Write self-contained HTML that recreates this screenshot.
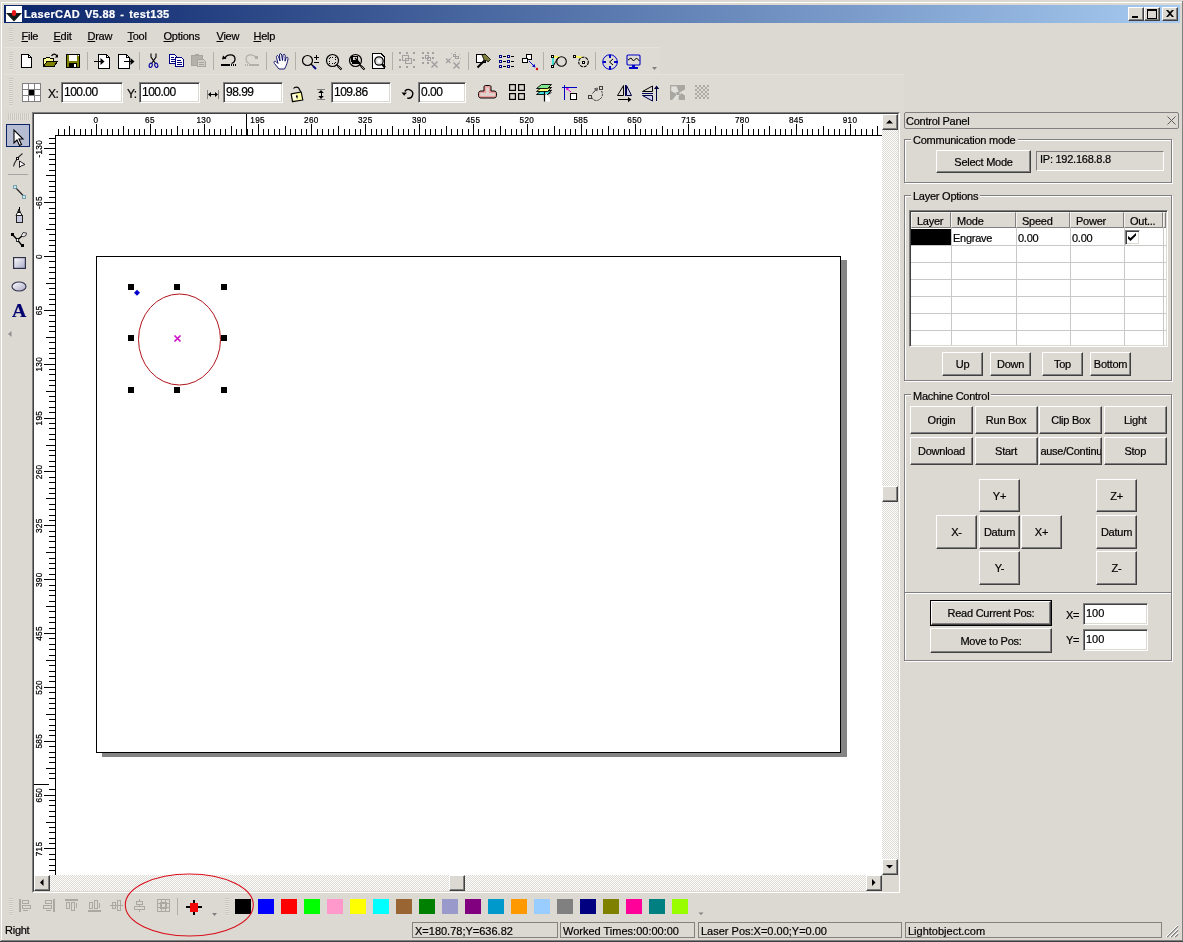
<!DOCTYPE html><html><head><meta charset="utf-8"><title>LaserCAD V5.88 - test135</title><style>
html,body{margin:0;padding:0}
body{width:1183px;height:942px;background:#dcd9d2;position:relative;overflow:hidden;font-family:"Liberation Sans",sans-serif;font-size:11px;color:#000;line-height:13px;letter-spacing:-0.25px;-webkit-text-stroke:0.2px currentColor}
.a{position:absolute}
.t{position:absolute;white-space:nowrap}
.btn{position:absolute;box-sizing:border-box;background:#dcd9d2;border:1px solid;border-color:#fff #404040 #404040 #fff;box-shadow:inset -1px -1px 0 #808080, inset 1px 1px 0 #dcd9d2;text-align:center;white-space:nowrap;overflow:hidden}
.sunk{position:absolute;box-sizing:border-box;background:#fff;border:1px solid;border-color:#808080 #fff #fff #808080;box-shadow:inset 1px 1px 0 #404040, inset -1px -1px 0 #dcd9d2}
.grp{position:absolute;box-sizing:border-box;border:1px solid #808080;box-shadow:1px 1px 0 #fff, inset 1px 1px 0 #fff}
.grp>span{position:absolute;top:-6px;left:6px;background:#dcd9d2;padding:0 2px;white-space:nowrap}
.sep{position:absolute;width:1px;background:#b2afa7}
.grip{position:absolute;width:4px;background:repeating-linear-gradient(to bottom,#cbc8c0 0,#cbc8c0 1px,#e4e1db 1px,#e4e1db 2px)}
.sb{position:absolute;background-image:conic-gradient(#fff 25%,#dcd9d2 0 50%,#fff 0 75%,#dcd9d2 0);background-size:2px 2px}
.st{position:absolute;box-sizing:border-box;border:1px solid #85827c;height:16px;top:922px;padding:2px 0 0 2px;white-space:nowrap;overflow:hidden;letter-spacing:0}
u{text-decoration:underline}
svg{position:absolute;overflow:visible}
</style></head><body><div id="w" style="position:absolute;left:0;top:0;width:1183px;height:942px;will-change:transform;background:#dcd9d2">
<div class="a" style="left:1px;top:2px;width:1181px;height:1px;background:#fff"></div>
<div class="a" style="left:1px;top:2px;width:1px;height:938px;background:#fff"></div>
<div class="a" style="left:1182px;top:1px;width:1px;height:941px;background:#808080"></div>
<div class="a" style="left:1px;top:940px;width:1182px;height:1px;background:#808080"></div>
<div class="a" style="left:0;top:941px;width:1183px;height:1px;background:#404040"></div>
<div class="a" style="left:4px;top:5px;width:1176px;height:18px;background:linear-gradient(to right,#0a246a,#a6caf0)"></div>
<svg style="left:6px;top:6px" width="16" height="16" viewBox="0 0 16 16"><rect width="16" height="16" fill="#fff"/><polygon points="0,7 16,7 8,15.500" fill="#101818"/><ellipse cx="8" cy="7" rx="2.200" ry="3" fill="#e81818"/></svg>
<div class="t" id="title" style="left:24px;top:8px;color:#fff;font-weight:bold;font-size:11px;letter-spacing:0.35px;word-spacing:1.500px">LaserCAD V5.88 - test135</div>
<div class="btn" style="left:1128px;top:7px;width:16px;height:14px"></div>
<svg style="left:1128px;top:7px" width="16" height="14" viewBox="0 0 16 14" shape-rendering="crispEdges"><rect x="4" y="9" width="6" height="2" fill="#000"/></svg>
<div class="btn" style="left:1144px;top:7px;width:16px;height:14px"></div>
<svg style="left:1144px;top:7px" width="16" height="14" viewBox="0 0 16 14" shape-rendering="crispEdges"><rect x="3" y="2" width="9" height="9" fill="none" stroke="#000" stroke-width="1" transform="translate(.5,.5)"/><rect x="3" y="2" width="10" height="2" fill="#000"/></svg>
<div class="btn" style="left:1162px;top:7px;width:16px;height:14px"></div>
<svg style="left:1162px;top:7px" width="16" height="14" viewBox="0 0 16 14" shape-rendering="crispEdges"><path d="M4 3h2l2 2 2-2h2l-3 3.5 3 3.5h-2l-2-2-2 2h-2l3-3.5z" fill="#000" shape-rendering="auto"/></svg>
<div class="grip" style="left:9px;top:28px;height:14px"></div>
<div class="t" style="left:21.5px;top:30px"><u>F</u>ile</div>
<div class="t" style="left:53.5px;top:30px"><u>E</u>dit</div>
<div class="t" style="left:87.5px;top:30px"><u>D</u>raw</div>
<div class="t" style="left:127.5px;top:30px"><u>T</u>ool</div>
<div class="t" style="left:163.5px;top:30px"><u>O</u>ptions</div>
<div class="t" style="left:216.5px;top:30px"><u>V</u>iew</div>
<div class="t" style="left:253.5px;top:30px"><u>H</u>elp</div>
<div class="a" style="left:4px;top:47px;width:656px;height:1px;background:#e4e2dc"></div>
<div class="a" style="left:4px;top:74px;width:900px;height:1px;background:#e4e2dc"></div>
<div class="a" style="left:4px;top:48px;width:656px;height:26px;background:#dedbd4"></div>
<div class="a" style="left:4px;top:75px;width:900px;height:35px;background:#dedbd4"></div>
<div class="grip" style="left:9px;top:52px;height:18px"></div>
<div class="grip" style="left:9px;top:78px;height:28px"></div>
<div class="sep" style="left:87px;top:52px;height:18px"></div>
<div class="sep" style="left:139px;top:52px;height:18px"></div>
<div class="sep" style="left:213px;top:52px;height:18px"></div>
<div class="sep" style="left:266px;top:52px;height:18px"></div>
<div class="sep" style="left:295px;top:52px;height:18px"></div>
<div class="sep" style="left:392px;top:52px;height:18px"></div>
<div class="sep" style="left:468px;top:52px;height:18px"></div>
<div class="sep" style="left:543px;top:52px;height:18px"></div>
<div class="sep" style="left:595px;top:52px;height:18px"></div>
<svg style="left:20px;top:53px" width="16" height="16" viewBox="0 0 16 16" shape-rendering="crispEdges"><path d="M1.5 1.500h7l3 3v9.500h-10z" fill="#fff" stroke="#000"/><path d="M8.500 1.500v3h3" fill="none" stroke="#000"/></svg>
<svg style="left:43px;top:53px" width="16" height="16" viewBox="0 0 16 16" shape-rendering="crispEdges"><path d="M0.500 13.500v-8h2l1-1h3l1 1h3v3" fill="#ffff99" stroke="#000"/><path d="M0.500 13.500l3.500-5h10.500l-3.500 5z" fill="#808000" stroke="#000"/><path d="M8.500 3c1.500-2.500 4.500-2.500 5.500 0.500" fill="none" stroke="#000" stroke-width="1.200" shape-rendering="auto"/><path d="M11.800 4.500h3.200v-3.200z" fill="#000" shape-rendering="auto"/></svg>
<svg style="left:66px;top:54px" width="14" height="14" viewBox="0 0 14 14" shape-rendering="crispEdges"><rect x="0.500" y="0.500" width="13" height="13" fill="#808000" stroke="#000"/><rect x="3" y="1" width="8" height="6" fill="#fff"/><rect x="3" y="9" width="8" height="4" fill="#000"/><rect x="8" y="10" width="2" height="3" fill="#fff"/><rect x="12" y="1" width="1" height="1" fill="#fff"/></svg>
<svg style="left:94px;top:53px" width="18" height="17" viewBox="0 0 18 17" shape-rendering="crispEdges"><path d="M4.500 1.500h8l3 3v11h-11z" fill="#fff" stroke="#000"/><path d="M12.500 1.500v3h3" fill="none" stroke="#000"/><rect x="0" y="8" width="7" height="1" fill="#000"/><path d="M6.500 5l4 3.500-4 3.500z" fill="#000" shape-rendering="auto"/></svg>
<svg style="left:118px;top:53px" width="18" height="17" viewBox="0 0 18 17" shape-rendering="crispEdges"><path d="M0.500 1.500h8l3 3v11h-11z" fill="#fff" stroke="#000"/><path d="M8.500 1.500v3h3" fill="none" stroke="#000"/><rect x="6" y="8" width="7" height="1" fill="#000"/><path d="M12.500 5l4 3.500-4 3.500z" fill="#000" shape-rendering="auto"/></svg>
<svg style="left:148px;top:53px" width="12" height="16" viewBox="0 0 12 16" shape-rendering="crispEdges"><path d="M3 0.500v3.500l4.500 6.500M8 0.500v3.500l-4.500 6.500" fill="none" stroke="#000" stroke-width="1.100" shape-rendering="auto"/><ellipse cx="2.700" cy="12.300" rx="1.500" ry="2.200" fill="none" stroke="#0000a0" stroke-width="1.100" transform="rotate(18 2.700 12.300)" shape-rendering="auto"/><ellipse cx="8.300" cy="12.300" rx="1.500" ry="2.200" fill="none" stroke="#0000a0" stroke-width="1.100" transform="rotate(-18 8.300 12.300)" shape-rendering="auto"/></svg>
<svg style="left:169px;top:53px" width="16" height="16" viewBox="0 0 16 16" shape-rendering="crispEdges"><path d="M0.5 1.5h5l2 2v7h-7z" fill="#fff" stroke="#000080"/><path d="M2 4.5h3M2 6.5h4M2 8.5h4" stroke="#000080" fill="none"/><path d="M6.5 4.5h6l2 2v7h-8z" fill="#fff" stroke="#000080"/><path d="M8 7.5h4M8 9.5h5M8 11.5h5" stroke="#000080" fill="none"/></svg>
<svg style="left:191px;top:53px" width="16" height="16" viewBox="0 0 16 16" shape-rendering="crispEdges"><rect x="0.500" y="2.500" width="11" height="10" fill="#b4b1aa" stroke="#a8a59e"/><rect x="4" y="1" width="4" height="2" fill="#a8a59e"/><path d="M6.500 6.500h6l2 2v5h-8z" fill="#d0cdc6" stroke="#a8a59e"/><path d="M8 9.500h5M8 11.500h5" stroke="#a8a59e"/></svg>
<svg style="left:221px;top:53px" width="16" height="14" viewBox="0 0 16 14" shape-rendering="crispEdges"><path d="M4 5.500c1.500-5 10-5 10 0.500 0 3-2 4-3.500 4.500" fill="none" stroke="#000" stroke-width="1.300" shape-rendering="auto"/><path d="M1 6.500l1-4 3.500 3z" fill="#000" shape-rendering="auto"/><rect x="0" y="11" width="9" height="2" fill="#000"/><rect x="10" y="11" width="1" height="2" fill="#000"/><rect x="12" y="11" width="1" height="2" fill="#000"/><rect x="14" y="11" width="1" height="2" fill="#000"/></svg>
<svg style="left:244px;top:53px" width="16" height="14" viewBox="0 0 16 14" shape-rendering="crispEdges"><path d="M12 5.500c-1.500-5-10-5-10 0.500 0 3 2 4 3.500 4.500" fill="none" stroke="#b4b0a8" stroke-width="1.200" shape-rendering="auto"/><rect x="11" y="3" width="3" height="3" fill="#b0aca4"/><rect x="5" y="11" width="10" height="2" fill="#b4b0a8"/><rect x="1" y="11" width="1" height="2" fill="#b4b0a8"/><rect x="3" y="11" width="1" height="2" fill="#b4b0a8"/></svg>
<svg style="left:273px;top:53px" width="17" height="17" viewBox="0 0 17 17" shape-rendering="crispEdges"><path d="M6 16l-4.500-5.500c-1.500-2 0.500-3 2-1.500l1.500 1.500-1.500-6c-.5-2 1.500-2.500 2-1l1.500 4.500-.5-6c0-1.800 2-1.800 2.200 0l.8 5.500.5-5c.2-1.700 2.200-1.500 2.200.2l-.2 5.500 1-3c.6-1.600 2.300-1 2 .5-.5 3.500-1.500 6.500-3.500 10.300z" fill="#fff" stroke="#000060" stroke-width="0.900" stroke-linejoin="round" shape-rendering="auto"/></svg>
<svg style="left:301px;top:53px" width="20" height="18" viewBox="0 0 20 18" shape-rendering="crispEdges"><circle cx="6.500" cy="7.500" r="5" fill="none" stroke="#000" stroke-width="1.200" shape-rendering="auto"/><path d="M10 11l2 2" stroke="#000" stroke-width="1.200" shape-rendering="auto"/><path d="M12 13l3 3" stroke="#000080" stroke-width="2" shape-rendering="auto"/><path d="M13 4.500h5M15.500 2v5M13 9.500h5" stroke="#000" fill="none"/></svg>
<svg style="left:325px;top:53px" width="18" height="18" viewBox="0 0 18 18" shape-rendering="crispEdges"><circle cx="7.500" cy="7.500" r="6" fill="none" stroke="#000" stroke-width="1.200" shape-rendering="auto"/><rect x="4.500" y="4.500" width="6" height="6" fill="none" stroke="#000" stroke-dasharray="1 1.500"/><path d="M11.500 11.500l2 2" stroke="#000" stroke-width="1.200" shape-rendering="auto"/><path d="M13 13l3.500 3.500" stroke="#000" stroke-width="2.200" shape-rendering="auto"/><path d="M13.500 13.500l2.500 2.500" stroke="#dcd9d2" stroke-width=".7" shape-rendering="auto"/></svg>
<svg style="left:348px;top:53px" width="18" height="18" viewBox="0 0 18 18" shape-rendering="crispEdges"><circle cx="7.500" cy="7.500" r="6" fill="none" stroke="#000" stroke-width="1.200" shape-rendering="auto"/><rect x="3" y="3" width="7" height="6" fill="#000"/><rect x="5" y="4" width="4" height="3" fill="#dcd9d2"/><rect x="4" y="9" width="8" height="2" fill="#000"/><path d="M7 5l4 4" stroke="#000" stroke-width="1.300" shape-rendering="auto"/><path d="M11.500 11.500l2 2" stroke="#000" stroke-width="1.200" shape-rendering="auto"/><path d="M13 13l3.500 3.500" stroke="#000" stroke-width="2.200" shape-rendering="auto"/><path d="M13.500 13.500l2.500 2.500" stroke="#dcd9d2" stroke-width=".7" shape-rendering="auto"/></svg>
<svg style="left:372px;top:53px" width="14" height="17" viewBox="0 0 14 17" shape-rendering="crispEdges"><path d="M0.700 0.700h8.800l3 3v11.800h-11.800z" fill="#fff" stroke="#000" stroke-width="1.400"/><rect x="12" y="4" width="1" height="12" fill="#000"/><rect x="1" y="15" width="12" height="1" fill="#000"/><circle cx="7" cy="8" r="4.200" fill="#fff" stroke="#000" stroke-width="1.300" shape-rendering="auto"/><circle cx="7" cy="8" r="2.500" fill="none" stroke="#c8c8c8" stroke-width="1" shape-rendering="auto"/><path d="M10 11l3 3.500" stroke="#000" stroke-width="2.200" shape-rendering="auto"/></svg>
<svg style="left:399px;top:52px" width="16" height="16" viewBox="0 0 16 16" shape-rendering="crispEdges"><rect x="0" y="0" width="2" height="2" fill="#a0a0a0"/><rect x="0" y="7" width="2" height="2" fill="#a0a0a0"/><rect x="0" y="14" width="2" height="2" fill="#a0a0a0"/><rect x="7" y="0" width="2" height="2" fill="#a0a0a0"/><rect x="7" y="14" width="2" height="2" fill="#a0a0a0"/><rect x="14" y="0" width="2" height="2" fill="#a0a0a0"/><rect x="14" y="7" width="2" height="2" fill="#a0a0a0"/><rect x="14" y="14" width="2" height="2" fill="#a0a0a0"/><rect x="3.500" y="3.500" width="6" height="5" fill="none" stroke="#a0a0a0"/><rect x="6.500" y="6.500" width="6" height="5" fill="none" stroke="#a0a0a0"/></svg>
<svg style="left:422px;top:52px" width="17" height="17" viewBox="0 0 17 17" shape-rendering="crispEdges"><rect x="0" y="0" width="1.500" height="1.500" fill="#a0a0a0"/><rect x="0" y="5" width="1.500" height="1.500" fill="#a0a0a0"/><rect x="0" y="10" width="1.500" height="1.500" fill="#a0a0a0"/><rect x="5" y="0" width="1.500" height="1.500" fill="#a0a0a0"/><rect x="5" y="10" width="1.500" height="1.500" fill="#a0a0a0"/><rect x="10" y="0" width="1.500" height="1.500" fill="#a0a0a0"/><rect x="10" y="5" width="1.500" height="1.500" fill="#a0a0a0"/><rect x="3.500" y="3.500" width="3" height="3" fill="none" stroke="#a0a0a0"/><rect x="5.500" y="5.500" width="3" height="3" fill="none" stroke="#a0a0a0"/><path d="M9.500 9.500l6 6m0-6l-6 6" stroke="#a0a0a0" stroke-width="1.500" fill="none" shape-rendering="auto"/></svg>
<svg style="left:445px;top:52px" width="17" height="17" viewBox="0 0 17 17" shape-rendering="crispEdges"><path d="M1 6.500l4.500 4.500m0-4.500l-4.500 4.500" stroke="#a0a0a0" stroke-width="1.300" fill="none" shape-rendering="auto"/><path d="M8.500 10.500l6 6m0-6l-6 6" stroke="#a0a0a0" stroke-width="1.500" fill="none" shape-rendering="auto"/><rect x="8.500" y="2.500" width="2" height="2" fill="none" stroke="#a0a0a0"/><rect x="10.500" y="4.500" width="3" height="2" fill="none" stroke="#a0a0a0"/><rect x="6" y="1" width="1" height="1" fill="#b8b4ac"/><rect x="10" y="0" width="1" height="1" fill="#b8b4ac"/><rect x="14" y="2" width="1" height="1" fill="#b8b4ac"/><rect x="6" y="5" width="1" height="1" fill="#b8b4ac"/><rect x="15" y="6" width="1" height="1" fill="#b8b4ac"/><rect x="8" y="8" width="1" height="1" fill="#b8b4ac"/><rect x="14" y="9" width="1" height="1" fill="#b8b4ac"/></svg>
<svg style="left:475px;top:53px" width="17" height="17" viewBox="0 0 17 17" shape-rendering="crispEdges"><path d="M1.500 1.500h9v8h-9z" fill="#fff" stroke="#000" stroke-width="1.300"/><path d="M2.500 14.500l8-8" stroke="#000" stroke-width="2" shape-rendering="auto"/><path d="M7 2l3-1 5.500 5.500-2.500 2.500-1.500-2-2 1z" fill="#80803c" stroke="#000" stroke-width=".8" shape-rendering="auto"/></svg>
<svg style="left:499px;top:55px" width="16" height="14" viewBox="0 0 16 14" shape-rendering="crispEdges"><rect x="0.500" y="0.5" width="2" height="2" fill="#fff" stroke="#000080"/><rect x="4" y="1" width="3" height="1" fill="#000"/><rect x="8.500" y="0.5" width="2" height="2" fill="#fff" stroke="#000080"/><rect x="12" y="1" width="3" height="1" fill="#000"/><rect x="0.500" y="5.5" width="2" height="2" fill="#fff" stroke="#000080"/><rect x="4" y="6" width="3" height="1" fill="#000"/><rect x="8.500" y="5.5" width="2" height="2" fill="#fff" stroke="#000080"/><rect x="12" y="6" width="3" height="1" fill="#000"/><rect x="0.500" y="10.5" width="2" height="2" fill="#fff" stroke="#000080"/><rect x="4" y="11" width="3" height="1" fill="#000"/><rect x="8.500" y="10.5" width="2" height="2" fill="#fff" stroke="#000080"/><rect x="12" y="11" width="3" height="1" fill="#000"/></svg>
<svg style="left:522px;top:54px" width="17" height="17" viewBox="0 0 17 17" shape-rendering="crispEdges"><rect x="4.500" y="0.500" width="5" height="5" fill="#fff" stroke="#000" stroke-width="1.200"/><rect x="0.500" y="4.500" width="5" height="4" fill="#fff" stroke="#000" stroke-width="1.200"/><path d="M7 7l6 6" stroke="#0000c0" stroke-width="1" shape-rendering="auto"/><path d="M13.500 13.500l-3.500-1 2.500-2.500z" fill="#0000c0" shape-rendering="auto"/><circle cx="15" cy="15" r="1.200" fill="#e00000" shape-rendering="auto"/></svg>
<svg style="left:551px;top:55px" width="17" height="14" viewBox="0 0 17 14" shape-rendering="crispEdges"><path d="M2 2v10" stroke="#40e0d0" stroke-width="2"/><path d="M2 1.500l7 1" stroke="#ffff40" stroke-width="1.500" shape-rendering="auto"/><circle cx="10.500" cy="6.500" r="4.800" fill="none" stroke="#000" stroke-width="1.100" shape-rendering="auto"/><path d="M2 11.500c2-3 3-7 6-9.500" fill="none" stroke="#000" stroke-width="1" shape-rendering="auto"/><rect x="0.500" y="0.500" width="2" height="2" fill="#fff" stroke="#000"/><rect x="0.500" y="10.500" width="2" height="2" fill="#fff" stroke="#000"/></svg>
<svg style="left:573px;top:55px" width="17" height="14" viewBox="0 0 17 14" shape-rendering="crispEdges"><path d="M2 1.500l8 1" stroke="#ffff40" stroke-width="1.500" shape-rendering="auto"/><circle cx="10.500" cy="7" r="4.800" fill="none" stroke="#000" stroke-width="1.100" stroke-dasharray="3 1" shape-rendering="auto"/><rect x="0.500" y="0.500" width="2" height="2" fill="#fff" stroke="#000"/><rect x="9.500" y="6.500" width="2" height="2" fill="#fff" stroke="#000"/></svg>
<svg style="left:602px;top:54px" width="17" height="17" viewBox="0 0 17 17" shape-rendering="crispEdges"><circle cx="8" cy="8" r="7.300" fill="none" stroke="#0000c8" stroke-width="1" shape-rendering="auto"/><path d="M8 0.500v3.500M8 12v3.500M0.500 8h3.500M12 8h3.500" stroke="#0000c8" stroke-width="2" fill="none"/><path d="M11 5l-3.500 3 3.500 3" stroke="#000" stroke-width="1" fill="none" shape-rendering="auto"/></svg>
<svg style="left:626px;top:54px" width="16" height="16" viewBox="0 0 16 16" shape-rendering="crispEdges"><rect x="1" y="1" width="13" height="10" rx="1" fill="none" stroke="#0000c8" stroke-width="1.100" shape-rendering="auto"/><path d="M2 6l3-2 2.500 3 3-3 3 3" stroke="#000" stroke-width="1" fill="none" shape-rendering="auto"/><rect x="6" y="11" width="3" height="2" fill="#0000c8"/><rect x="3" y="13" width="9" height="1.500" fill="#0000c8"/></svg>
<svg style="left:652px;top:67px" width="6" height="3" viewBox="0 0 6 3" shape-rendering="crispEdges"><path d="M0 0h5l-2.500 3z" fill="#808080" shape-rendering="auto"/></svg>
<div class="t" style="left:48px;top:88px;font-size:12px;letter-spacing:-0.5px">X:</div>
<div class="sunk" style="left:61px;top:82px;width:62px;height:21px"></div>
<div class="t" style="left:64px;top:86px;font-size:12px;letter-spacing:-0.5px">100.00</div>
<div class="t" style="left:127px;top:88px;font-size:12px;letter-spacing:-0.5px">Y:</div>
<div class="sunk" style="left:139px;top:82px;width:61px;height:21px"></div>
<div class="t" style="left:142px;top:86px;font-size:12px;letter-spacing:-0.5px">100.00</div>
<div class="sunk" style="left:223px;top:82px;width:60px;height:21px"></div>
<div class="t" style="left:226px;top:86px;font-size:12px;letter-spacing:-0.5px">98.99</div>
<div class="sunk" style="left:331px;top:82px;width:60px;height:21px"></div>
<div class="t" style="left:334px;top:86px;font-size:12px;letter-spacing:-0.5px">109.86</div>
<div class="sunk" style="left:418px;top:82px;width:48px;height:21px"></div>
<div class="t" style="left:421px;top:86px;font-size:12px;letter-spacing:-0.5px">0.00</div>
<svg style="left:22px;top:83px" width="19" height="19" viewBox="0 0 19 19" shape-rendering="crispEdges"><rect x="0" y="0" width="19" height="19" fill="#808080"/><rect x="1" y="1" width="5" height="5" fill="#fff"/><rect x="1" y="7" width="5" height="5" fill="#fff"/><rect x="1" y="13" width="5" height="5" fill="#fff"/><rect x="7" y="1" width="5" height="5" fill="#fff"/><rect x="7" y="7" width="5" height="5" fill="#000"/><rect x="7" y="13" width="5" height="5" fill="#fff"/><rect x="13" y="1" width="5" height="5" fill="#fff"/><rect x="13" y="7" width="5" height="5" fill="#fff"/><rect x="13" y="13" width="5" height="5" fill="#fff"/></svg>
<svg style="left:207px;top:89px" width="12" height="11" viewBox="0 0 12 11" shape-rendering="crispEdges"><rect x="0" y="1" width="1" height="9" fill="#808080"/><rect x="11" y="1" width="1" height="9" fill="#808080"/><rect x="2" y="5" width="8" height="1" fill="#000"/><path d="M1 5.500l3-2.500v5zM11 5.500l-3-2.500v5z" fill="#000" shape-rendering="auto"/></svg>
<svg style="left:289px;top:86px" width="16" height="17" viewBox="0 0 16 17" shape-rendering="crispEdges"><path d="M4.500 2.500c1.500-2 5-2 6 1l1.500 3" fill="none" stroke="#000" stroke-width="1.200" shape-rendering="auto"/><path d="M2.200 7.800l10-1.800 1.600 8-10.300 1.700z" fill="#ffffa0" stroke="#000" stroke-width="1.200" stroke-linejoin="round" shape-rendering="auto"/><path d="M3.500 9l4-0.700 0.500 5-3.500 0.600z" fill="#fffff0" shape-rendering="auto"/><circle cx="7.800" cy="10.300" r="1" fill="#000" shape-rendering="auto"/><path d="M7.800 10.500l.4 2" stroke="#000" stroke-width="1" shape-rendering="auto"/></svg>
<svg style="left:316px;top:89px" width="10" height="11" viewBox="0 0 10 11" shape-rendering="crispEdges"><rect x="1" y="0" width="8" height="1" fill="#808080"/><rect x="1" y="10" width="8" height="1" fill="#808080"/><rect x="4.500" y="2" width="1" height="7" fill="#000"/><path d="M5 1l2.800 3h-5.600zM5 10l2.800-3h-5.600z" fill="#000" shape-rendering="auto"/></svg>
<svg style="left:401px;top:88px" width="13" height="12" viewBox="0 0 13 12" shape-rendering="crispEdges"><path d="M3.800 3.500a4.300 4.300 0 1 1 2.500 6.500" fill="none" stroke="#000" stroke-width="1.400" shape-rendering="auto"/><path d="M0.500 4.600h5.400l-2.700 3.200z" fill="#000" shape-rendering="auto"/></svg>
<svg style="left:478px;top:85px" width="20" height="14" viewBox="0 0 20 14" shape-rendering="crispEdges"><path d="M7.500 0.500h4c1 0 1.500.5 1.500 1.500v4h3c1.500 0 2.500 1 2.500 2.500v2c0 1.500-1 2.500-2.500 2.500h-13c-1.500 0-2.500-1-2.500-2.500v-2c0-1.500 1-2.500 2.500-2.500h3v-4c0-1 .5-1.500 1.500-1.500z" fill="#ec9c9c" stroke="#000" stroke-width="1" shape-rendering="auto"/><path d="M8 2.500h3v5.500h5c.7 0 1 .3 1 1v1c0 .7-.3 1-1 1h-13c-.7 0-1-.3-1-1v-1c0-.7.300-1 1-1h5z" fill="#e0d0cc" shape-rendering="auto"/></svg>
<svg style="left:509px;top:84px" width="16" height="16" viewBox="0 0 16 16"><rect x="0.6" y="0.6" width="5.800" height="5.800" fill="#dcd8d0" stroke="#000" stroke-width="1.200"/><rect x="0.6" y="9.6" width="5.800" height="5.800" fill="#dcd8d0" stroke="#000" stroke-width="1.200"/><rect x="9.6" y="0.6" width="5.800" height="5.800" fill="#dcd8d0" stroke="#000" stroke-width="1.200"/><rect x="9.6" y="9.6" width="5.800" height="5.800" fill="#dcd8d0" stroke="#000" stroke-width="1.200"/></svg>
<svg style="left:536px;top:83px" width="17" height="19" viewBox="0 0 17 19"><path d="M0.500 11.500l5-4h10l-4 4z" fill="#40e0e0" stroke="#000" stroke-width=".9"/><path d="M0.500 8.500l5-4h10l-4 4z" fill="#ffff80" stroke="#000" stroke-width=".9"/><path d="M0.500 5.500l5-4h10l-4 4z" fill="#80e890" stroke="#000" stroke-width=".9"/><path d="M8.500 8v10.500" stroke="#000" stroke-width="1.200"/><path d="M9.500 10l4.500 5v3.500h-4.500z" fill="#fff"/><path d="M11.500 5.500l4-1M11.500 8.500l4-1.500M11.500 11.500l4-2" stroke="#000" stroke-width=".8"/></svg>
<svg style="left:562px;top:84px" width="16" height="17" viewBox="0 0 16 17" shape-rendering="crispEdges"><rect x="0" y="3" width="15" height="1.300" fill="#0000c0"/><rect x="2" y="1" width="1.300" height="15" fill="#0000c0"/><path d="M9 8l-4.500-3.500" stroke="#e000e0" stroke-width="1" shape-rendering="auto"/><path d="M4 4l3 .3-2 2.200z" fill="#e000e0" shape-rendering="auto"/><rect x="8.600" y="9.600" width="6" height="6" fill="#fff" stroke="#000" stroke-width="1.200"/></svg>
<svg style="left:587px;top:85px" width="18" height="17" viewBox="0 0 18 17" shape-rendering="crispEdges"><path d="M5 12.500c1 4 7 4 9.500 0 1.500-2.500 1-5 0-6.500" fill="none" stroke="#404040" stroke-width="1" stroke-dasharray="2.500 .8" shape-rendering="auto"/><rect x="1.500" y="10.500" width="3" height="3" fill="#dcd9d2" stroke="#404040" stroke-width="1"/><rect x="12.500" y="1.500" width="3" height="3" fill="#dcd9d2" stroke="#404040" stroke-width="1"/><path d="M5.500 8.500l4-4.500" stroke="#404040" stroke-width="1" shape-rendering="auto"/><path d="M10.500 3l-.5 3-2.500-2.200z" fill="none" stroke="#404040" stroke-width=".8" shape-rendering="auto"/></svg>
<svg style="left:616px;top:84px" width="17" height="18" viewBox="0 0 17 18" shape-rendering="crispEdges"><path d="M1.500 11.500l6-10v10z" fill="none" stroke="#000" stroke-width="1" shape-rendering="auto"/><path d="M10.500 1.500l5 10h-5z" fill="#d0d0f0" stroke="#000040" stroke-width="1" shape-rendering="auto"/><rect x="8.500" y="1" width="1" height="11" fill="#000060"/><rect x="2" y="15" width="11" height="1.300" fill="#000"/><path d="M15.500 15.600l-3.500-2.600v5.200z" fill="#000" shape-rendering="auto"/></svg>
<svg style="left:641px;top:85px" width="19" height="17" viewBox="0 0 19 17" shape-rendering="crispEdges"><path d="M1.500 6.500l10-5.500v5.500z" fill="none" stroke="#000" stroke-width="1" shape-rendering="auto"/><path d="M1.500 10.500l10 5.500v-5.500z" fill="#d0d0f0" stroke="#000040" stroke-width="1" shape-rendering="auto"/><rect x="1" y="8" width="11" height="1" fill="#000060"/><rect x="15" y="3" width="1.300" height="13" fill="#000040"/><path d="M15.600 0.500l-2.600 3.500h5.200z" fill="#000040" shape-rendering="auto"/></svg>
<svg style="left:670px;top:85px" width="15" height="15" viewBox="0 0 15 15"><rect x="0" y="0" width="15" height="15" fill="#e2e0da"/><rect x="0" y="0" width="15" height="1.300" fill="#a9a7a1"/><rect x="0" y="0" width="1.200" height="15" fill="#a9a7a1"/><path d="M6.500 1h8.500v3.500l-6 3.500z" fill="#a9a7a1"/><path d="M0 5.500l7 3.500-4.700 6h-2.300z" fill="#a9a7a1"/><path d="M8.700 15v-4l2.800-3 3.500 2.500v4.500z" fill="#a9a7a1"/><path d="M6 7l3 0 1 3-3 0z" fill="#a9a7a1"/></svg>
<svg style="left:695px;top:85px" width="14" height="14" viewBox="0 0 14 14" shape-rendering="crispEdges"><rect x="0" y="0" width="2" height="2" fill="#aeaaa2"/><rect x="0" y="4" width="2" height="2" fill="#aeaaa2"/><rect x="0" y="8" width="2" height="2" fill="#aeaaa2"/><rect x="0" y="12" width="2" height="2" fill="#aeaaa2"/><rect x="2" y="2" width="2" height="2" fill="#aeaaa2"/><rect x="2" y="6" width="2" height="2" fill="#aeaaa2"/><rect x="2" y="10" width="2" height="2" fill="#aeaaa2"/><rect x="4" y="0" width="2" height="2" fill="#aeaaa2"/><rect x="4" y="4" width="2" height="2" fill="#aeaaa2"/><rect x="4" y="8" width="2" height="2" fill="#aeaaa2"/><rect x="4" y="12" width="2" height="2" fill="#aeaaa2"/><rect x="6" y="2" width="2" height="2" fill="#aeaaa2"/><rect x="6" y="6" width="2" height="2" fill="#aeaaa2"/><rect x="6" y="10" width="2" height="2" fill="#aeaaa2"/><rect x="8" y="0" width="2" height="2" fill="#aeaaa2"/><rect x="8" y="4" width="2" height="2" fill="#aeaaa2"/><rect x="8" y="8" width="2" height="2" fill="#aeaaa2"/><rect x="8" y="12" width="2" height="2" fill="#aeaaa2"/><rect x="10" y="2" width="2" height="2" fill="#aeaaa2"/><rect x="10" y="6" width="2" height="2" fill="#aeaaa2"/><rect x="10" y="10" width="2" height="2" fill="#aeaaa2"/><rect x="12" y="0" width="2" height="2" fill="#aeaaa2"/><rect x="12" y="4" width="2" height="2" fill="#aeaaa2"/><rect x="12" y="8" width="2" height="2" fill="#aeaaa2"/><rect x="12" y="12" width="2" height="2" fill="#aeaaa2"/></svg>
<div class="grip" style="left:8px;top:113px;width:22px;height:7px;background:repeating-linear-gradient(to right,#cbc8c0 0,#cbc8c0 1px,#e4e1db 1px,#e4e1db 2px)"></div>
<div class="a" style="left:6px;top:124px;width:24px;height:23px;box-sizing:border-box;border:1px solid #0a246a;background:#b6bdd2"></div>
<div class="a" style="left:8px;top:174px;width:20px;height:1px;background:#a6a6a6"></div>
<svg style="left:13px;top:129px" width="11" height="18" viewBox="0 0 11 18" shape-rendering="crispEdges"><path d="M1 1v13l3-3 2.500 5.500 2-1-2.500-5.500h4z" fill="#fff" stroke="#000" stroke-width="1.100" stroke-linejoin="miter" shape-rendering="auto"/></svg>
<svg style="left:12px;top:152px" width="14" height="17" viewBox="0 0 14 17" shape-rendering="crispEdges"><path d="M1.500 14.500c1-5 4-9 9-13" fill="none" stroke="#303030" stroke-width="1.100" shape-rendering="auto"/><rect x="4.500" y="5.500" width="2" height="2" fill="#fff" stroke="#000" stroke-width=".9"/><path d="M7.500 9v6.500l1.500-1.500 4-1.500z" fill="#fff" stroke="#202020" stroke-width="1" shape-rendering="auto"/></svg>
<svg style="left:12px;top:184px" width="14" height="15" viewBox="0 0 14 15" shape-rendering="crispEdges"><path d="M2.500 2.500l9.500 10" stroke="#202020" stroke-width="1.100" shape-rendering="auto"/><rect x="1" y="1" width="3" height="3" fill="#c8e8f0" stroke="#6090a0" stroke-width=".8"/><rect x="10.500" y="11" width="3" height="3" fill="#c8e8f0" stroke="#6090a0" stroke-width=".8"/></svg>
<svg style="left:15px;top:206px" width="8" height="18" viewBox="0 0 8 18" shape-rendering="crispEdges"><path d="M4 0.500v3" stroke="#000" stroke-width="1"/><path d="M2.500 6.500l1.500-3.500 1.500 3.500z" fill="#404040" stroke="#000" stroke-width=".8" shape-rendering="auto"/><path d="M1 9.500l1.500-3h3l1.500 3z" fill="#fff" stroke="#000" stroke-width=".9" shape-rendering="auto"/><rect x="1" y="9.500" width="6" height="7" fill="#c8c8e0" stroke="#202020" stroke-width="1"/></svg>
<svg style="left:10px;top:231px" width="18" height="17" viewBox="0 0 18 17" shape-rendering="crispEdges"><path d="M2.500 3.500l5 5.500 4.500 5.500M7.500 9l5-4.500" stroke="#000" stroke-width="1.300" fill="none" shape-rendering="auto"/><rect x="1" y="2" width="3" height="3" fill="#000"/><rect x="10.500" y="12.500" width="3" height="3" fill="#000"/><rect x="6" y="7.500" width="2.500" height="2.500" fill="#fff" stroke="#000" stroke-width=".8"/><path d="M11.500 4.500l1.500-3 3.500.5-.5 2.500-3 1.500z" fill="#e8e8e8" stroke="#303030" stroke-width=".9" shape-rendering="auto"/></svg>
<svg style="left:13px;top:257px" width="13" height="12" viewBox="0 0 13 12"><defs><linearGradient id="gr1" x1="0" y1="0" x2="1" y2="1"><stop offset="0" stop-color="#fff"/><stop offset="1" stop-color="#a8a8c8"/></linearGradient></defs><rect x="0.600" y="0.600" width="11.800" height="10.800" fill="url(#gr1)" stroke="#303048" stroke-width="1.200"/></svg>
<svg style="left:11px;top:281px" width="16" height="11" viewBox="0 0 16 11"><ellipse cx="8" cy="5.500" rx="7" ry="4.500" fill="url(#gr1)" stroke="#303048" stroke-width="1.100"/></svg>
<div class="t" style="left:12px;top:300px;font-family:'Liberation Serif',serif;font-weight:bold;font-size:18px;line-height:22px;color:#000070;letter-spacing:0;transform:scaleX(1.1);transform-origin:0 0">A</div>
<svg style="left:8px;top:331px" width="4" height="6" viewBox="0 0 4 6" shape-rendering="crispEdges"><path d="M3.500 0l-3.500 3 3.500 3z" fill="#909090" shape-rendering="auto"/></svg>
<div class="a" style="left:32px;top:112px;width:868px;height:781px;box-sizing:border-box;border:1px solid;border-color:#808080 #fff #fff #808080;background:#fff"></div>
<div class="a" style="left:33px;top:113px;width:866px;height:779px;box-sizing:border-box;border:1px solid;border-color:#404040 #dcd9d2 #dcd9d2 #404040"></div>
<svg style="left:0;top:0" width="1183" height="942" viewBox="0 0 1183 942" shape-rendering="crispEdges" font-family="Liberation Sans, sans-serif" font-size="8.2" letter-spacing="0.3" stroke="#000" stroke-width="0.2"><rect x="55" y="135" width="827" height="1" fill="#000" stroke="none"/><rect x="55" y="135" width="1" height="740" fill="#000" stroke="none"/><path d="M58 129h1v6h-1zM64 129h1v6h-1zM69 126h1v9h-1zM74 129h1v6h-1zM80 129h1v6h-1zM85 129h1v6h-1zM91 129h1v6h-1zM96 124h1v11h-1zM101 129h1v6h-1zM107 129h1v6h-1zM112 129h1v6h-1zM118 129h1v6h-1zM123 126h1v9h-1zM128 129h1v6h-1zM134 129h1v6h-1zM139 129h1v6h-1zM144 129h1v6h-1zM150 124h1v11h-1zM155 129h1v6h-1zM161 129h1v6h-1zM166 129h1v6h-1zM171 129h1v6h-1zM177 126h1v9h-1zM182 129h1v6h-1zM188 129h1v6h-1zM193 129h1v6h-1zM198 129h1v6h-1zM204 124h1v11h-1zM209 129h1v6h-1zM214 129h1v6h-1zM220 129h1v6h-1zM225 129h1v6h-1zM231 126h1v9h-1zM236 129h1v6h-1zM241 129h1v6h-1zM247 129h1v6h-1zM252 129h1v6h-1zM258 124h1v11h-1zM263 129h1v6h-1zM268 129h1v6h-1zM274 129h1v6h-1zM279 129h1v6h-1zM285 126h1v9h-1zM290 129h1v6h-1zM295 129h1v6h-1zM301 129h1v6h-1zM306 129h1v6h-1zM311 124h1v11h-1zM317 129h1v6h-1zM322 129h1v6h-1zM328 129h1v6h-1zM333 129h1v6h-1zM338 126h1v9h-1zM344 129h1v6h-1zM349 129h1v6h-1zM355 129h1v6h-1zM360 129h1v6h-1zM365 124h1v11h-1zM371 129h1v6h-1zM376 129h1v6h-1zM381 129h1v6h-1zM387 129h1v6h-1zM392 126h1v9h-1zM398 129h1v6h-1zM403 129h1v6h-1zM408 129h1v6h-1zM414 129h1v6h-1zM419 124h1v11h-1zM425 129h1v6h-1zM430 129h1v6h-1zM435 129h1v6h-1zM441 129h1v6h-1zM446 126h1v9h-1zM451 129h1v6h-1zM457 129h1v6h-1zM462 129h1v6h-1zM468 129h1v6h-1zM473 124h1v11h-1zM478 129h1v6h-1zM484 129h1v6h-1zM489 129h1v6h-1zM495 129h1v6h-1zM500 126h1v9h-1zM505 129h1v6h-1zM511 129h1v6h-1zM516 129h1v6h-1zM521 129h1v6h-1zM527 124h1v11h-1zM532 129h1v6h-1zM538 129h1v6h-1zM543 129h1v6h-1zM548 129h1v6h-1zM554 126h1v9h-1zM559 129h1v6h-1zM565 129h1v6h-1zM570 129h1v6h-1zM575 129h1v6h-1zM581 124h1v11h-1zM586 129h1v6h-1zM592 129h1v6h-1zM597 129h1v6h-1zM602 129h1v6h-1zM608 126h1v9h-1zM613 129h1v6h-1zM618 129h1v6h-1zM624 129h1v6h-1zM629 129h1v6h-1zM635 124h1v11h-1zM640 129h1v6h-1zM645 129h1v6h-1zM651 129h1v6h-1zM656 129h1v6h-1zM662 126h1v9h-1zM667 129h1v6h-1zM672 129h1v6h-1zM678 129h1v6h-1zM683 129h1v6h-1zM688 124h1v11h-1zM694 129h1v6h-1zM699 129h1v6h-1zM705 129h1v6h-1zM710 129h1v6h-1zM715 126h1v9h-1zM721 129h1v6h-1zM726 129h1v6h-1zM732 129h1v6h-1zM737 129h1v6h-1zM742 124h1v11h-1zM748 129h1v6h-1zM753 129h1v6h-1zM758 129h1v6h-1zM764 129h1v6h-1zM769 126h1v9h-1zM775 129h1v6h-1zM780 129h1v6h-1zM785 129h1v6h-1zM791 129h1v6h-1zM796 124h1v11h-1zM802 129h1v6h-1zM807 129h1v6h-1zM812 129h1v6h-1zM818 129h1v6h-1zM823 126h1v9h-1zM828 129h1v6h-1zM834 129h1v6h-1zM839 129h1v6h-1zM845 129h1v6h-1zM850 124h1v11h-1zM855 129h1v6h-1zM861 129h1v6h-1zM866 129h1v6h-1zM872 129h1v6h-1zM877 126h1v9h-1z" fill="#000" stroke="none"/><path d="M49 138h6v1h-6zM49 143h6v1h-6zM44 148h11v1h-11zM49 154h6v1h-6zM49 159h6v1h-6zM49 164h6v1h-6zM49 170h6v1h-6zM46 175h9v1h-9zM49 181h6v1h-6zM49 186h6v1h-6zM49 191h6v1h-6zM49 197h6v1h-6zM44 202h11v1h-11zM49 208h6v1h-6zM49 213h6v1h-6zM49 218h6v1h-6zM49 224h6v1h-6zM46 229h9v1h-9zM49 234h6v1h-6zM49 240h6v1h-6zM49 245h6v1h-6zM49 251h6v1h-6zM44 256h11v1h-11zM49 261h6v1h-6zM49 267h6v1h-6zM49 272h6v1h-6zM49 278h6v1h-6zM46 283h9v1h-9zM49 288h6v1h-6zM49 294h6v1h-6zM49 299h6v1h-6zM49 304h6v1h-6zM44 310h11v1h-11zM49 315h6v1h-6zM49 321h6v1h-6zM49 326h6v1h-6zM49 331h6v1h-6zM46 337h9v1h-9zM49 342h6v1h-6zM49 348h6v1h-6zM49 353h6v1h-6zM49 358h6v1h-6zM44 364h11v1h-11zM49 369h6v1h-6zM49 374h6v1h-6zM49 380h6v1h-6zM49 385h6v1h-6zM46 391h9v1h-9zM49 396h6v1h-6zM49 401h6v1h-6zM49 407h6v1h-6zM49 412h6v1h-6zM44 418h11v1h-11zM49 423h6v1h-6zM49 428h6v1h-6zM49 434h6v1h-6zM49 439h6v1h-6zM46 445h9v1h-9zM49 450h6v1h-6zM49 455h6v1h-6zM49 461h6v1h-6zM49 466h6v1h-6zM44 471h11v1h-11zM49 477h6v1h-6zM49 482h6v1h-6zM49 488h6v1h-6zM49 493h6v1h-6zM46 498h9v1h-9zM49 504h6v1h-6zM49 509h6v1h-6zM49 515h6v1h-6zM49 520h6v1h-6zM44 525h11v1h-11zM49 531h6v1h-6zM49 536h6v1h-6zM49 541h6v1h-6zM49 547h6v1h-6zM46 552h9v1h-9zM49 558h6v1h-6zM49 563h6v1h-6zM49 568h6v1h-6zM49 574h6v1h-6zM44 579h11v1h-11zM49 585h6v1h-6zM49 590h6v1h-6zM49 595h6v1h-6zM49 601h6v1h-6zM46 606h9v1h-9zM49 611h6v1h-6zM49 617h6v1h-6zM49 622h6v1h-6zM49 628h6v1h-6zM44 633h11v1h-11zM49 638h6v1h-6zM49 644h6v1h-6zM49 649h6v1h-6zM49 655h6v1h-6zM46 660h9v1h-9zM49 665h6v1h-6zM49 671h6v1h-6zM49 676h6v1h-6zM49 681h6v1h-6zM44 687h11v1h-11zM49 692h6v1h-6zM49 698h6v1h-6zM49 703h6v1h-6zM49 708h6v1h-6zM46 714h9v1h-9zM49 719h6v1h-6zM49 725h6v1h-6zM49 730h6v1h-6zM49 735h6v1h-6zM44 741h11v1h-11zM49 746h6v1h-6zM49 752h6v1h-6zM49 757h6v1h-6zM49 762h6v1h-6zM46 768h9v1h-9zM49 773h6v1h-6zM49 778h6v1h-6zM49 789h6v1h-6zM44 795h11v1h-11zM49 800h6v1h-6zM49 805h6v1h-6zM49 811h6v1h-6zM49 816h6v1h-6zM46 822h9v1h-9zM49 827h6v1h-6zM49 832h6v1h-6zM49 838h6v1h-6zM49 843h6v1h-6zM44 848h11v1h-11zM49 854h6v1h-6zM49 859h6v1h-6zM49 865h6v1h-6zM49 870h6v1h-6z" fill="#000" stroke="none"/><rect x="246" y="114" width="1" height="21" fill="#000" stroke="none"/><rect x="34" y="784" width="15" height="1" fill="#000" stroke="none"/><text transform="translate(96.0,123) scale(1,1.2)" text-anchor="middle">0</text><text transform="translate(149.9,123) scale(1,1.2)" text-anchor="middle">65</text><text transform="translate(203.7,123) scale(1,1.2)" text-anchor="middle">130</text><text transform="translate(257.6,123) scale(1,1.2)" text-anchor="middle">195</text><text transform="translate(311.4,123) scale(1,1.2)" text-anchor="middle">260</text><text transform="translate(365.3,123) scale(1,1.2)" text-anchor="middle">325</text><text transform="translate(419.2,123) scale(1,1.2)" text-anchor="middle">390</text><text transform="translate(473.0,123) scale(1,1.2)" text-anchor="middle">455</text><text transform="translate(526.9,123) scale(1,1.2)" text-anchor="middle">520</text><text transform="translate(580.7,123) scale(1,1.2)" text-anchor="middle">585</text><text transform="translate(634.6,123) scale(1,1.2)" text-anchor="middle">650</text><text transform="translate(688.5,123) scale(1,1.2)" text-anchor="middle">715</text><text transform="translate(742.3,123) scale(1,1.2)" text-anchor="middle">780</text><text transform="translate(796.2,123) scale(1,1.2)" text-anchor="middle">845</text><text transform="translate(850.0,123) scale(1,1.2)" text-anchor="middle">910</text><text transform="translate(42,148.8) rotate(-90) scale(1,1.2)" text-anchor="middle">-130</text><text transform="translate(42,202.6) rotate(-90) scale(1,1.2)" text-anchor="middle">-65</text><text transform="translate(42,256.5) rotate(-90) scale(1,1.2)" text-anchor="middle">0</text><text transform="translate(42,310.4) rotate(-90) scale(1,1.2)" text-anchor="middle">65</text><text transform="translate(42,364.2) rotate(-90) scale(1,1.2)" text-anchor="middle">130</text><text transform="translate(42,418.1) rotate(-90) scale(1,1.2)" text-anchor="middle">195</text><text transform="translate(42,471.9) rotate(-90) scale(1,1.2)" text-anchor="middle">260</text><text transform="translate(42,525.8) rotate(-90) scale(1,1.2)" text-anchor="middle">325</text><text transform="translate(42,579.7) rotate(-90) scale(1,1.2)" text-anchor="middle">390</text><text transform="translate(42,633.5) rotate(-90) scale(1,1.2)" text-anchor="middle">455</text><text transform="translate(42,687.4) rotate(-90) scale(1,1.2)" text-anchor="middle">520</text><text transform="translate(42,741.2) rotate(-90) scale(1,1.2)" text-anchor="middle">585</text><text transform="translate(42,795.1) rotate(-90) scale(1,1.2)" text-anchor="middle">650</text><text transform="translate(42,849.0) rotate(-90) scale(1,1.2)" text-anchor="middle">715</text></svg>
<div class="a" style="left:102px;top:260px;width:745px;height:497px;background:#848484"></div>
<div class="a" style="left:96px;top:256px;width:745px;height:497px;box-sizing:border-box;border:1px solid #000;background:#fff"></div>
<svg style="left:0;top:0" width="1183" height="942" viewBox="0 0 1183 942"><ellipse cx="179.5" cy="339.5" rx="41" ry="45.5" fill="none" stroke="#b0141c" stroke-width="1"/><rect x="128" y="284" width="6" height="6" fill="#000" shape-rendering="crispEdges"/><rect x="128" y="335" width="6" height="6" fill="#000" shape-rendering="crispEdges"/><rect x="128" y="387" width="6" height="6" fill="#000" shape-rendering="crispEdges"/><rect x="174" y="284" width="6" height="6" fill="#000" shape-rendering="crispEdges"/><rect x="174" y="387" width="6" height="6" fill="#000" shape-rendering="crispEdges"/><rect x="221" y="284" width="6" height="6" fill="#000" shape-rendering="crispEdges"/><rect x="221" y="335" width="6" height="6" fill="#000" shape-rendering="crispEdges"/><rect x="221" y="387" width="6" height="6" fill="#000" shape-rendering="crispEdges"/><path d="M174.500 335.500l6 6m0-6l-6 6" stroke="#d010c8" stroke-width="1.700" fill="none"/><path d="M137 289.800l3 3-3 3-3-3z" fill="#0000d0"/></svg>
<div class="sb" style="left:882px;top:114px;width:16px;height:761px"></div>
<div class="sb" style="left:34px;top:875px;width:848px;height:16px"></div>
<div class="a" style="left:882px;top:875px;width:16px;height:16px;background:#dcd9d2"></div>
<div class="btn" style="left:882px;top:114px;width:16px;height:16px"></div>
<svg style="left:882px;top:114px" width="16" height="16" viewBox="0 0 16 16"><polygon points="4,9.500 11,9.500 7.500,6" fill="#000"/></svg>
<div class="btn" style="left:882px;top:859px;width:16px;height:16px"></div>
<svg style="left:882px;top:859px" width="16" height="16" viewBox="0 0 16 16"><polygon points="4,6 11,6 7.500,9.500" fill="#000"/></svg>
<div class="btn" style="left:882px;top:486px;width:16px;height:16px"></div>
<div class="btn" style="left:34px;top:875px;width:16px;height:16px"></div>
<svg style="left:34px;top:875px" width="16" height="16" viewBox="0 0 16 16"><polygon points="9.500,4 9.500,11 6,7.500" fill="#000"/></svg>
<div class="btn" style="left:866px;top:875px;width:16px;height:16px"></div>
<svg style="left:866px;top:875px" width="16" height="16" viewBox="0 0 16 16"><polygon points="6,4 6,11 9.500,7.500" fill="#000"/></svg>
<div class="btn" style="left:449px;top:875px;width:16px;height:16px"></div>
<div class="grip" style="left:9px;top:898px;height:18px"></div>
<div class="sep" style="left:177px;top:898px;height:17px"></div>
<div class="grip" style="left:225px;top:898px;height:18px"></div>
<svg style="left:19px;top:899px" width="13" height="13" viewBox="0 0 13 13" shape-rendering="crispEdges"><rect x="0" y="0" width="2" height="13" fill="#aca8a0"/><rect x="3.500" y="1.500" width="6" height="3" fill="none" stroke="#aca8a0"/><rect x="3.500" y="6.500" width="8" height="3" fill="none" stroke="#aca8a0"/><rect x="4" y="11" width="5" height="1" fill="#aca8a0"/></svg>
<svg style="left:42px;top:899px" width="13" height="13" viewBox="0 0 13 13" shape-rendering="crispEdges"><rect x="11" y="0" width="2" height="13" fill="#aca8a0"/><rect x="3.500" y="1.500" width="6" height="3" fill="none" stroke="#aca8a0"/><rect x="1.500" y="6.500" width="8" height="3" fill="none" stroke="#aca8a0"/><rect x="4" y="11" width="5" height="1" fill="#aca8a0"/></svg>
<svg style="left:65px;top:899px" width="13" height="13" viewBox="0 0 13 13" shape-rendering="crispEdges"><rect x="0" y="0" width="13" height="2" fill="#aca8a0"/><rect x="1.500" y="3.500" width="3" height="6" fill="none" stroke="#aca8a0"/><rect x="6.500" y="3.500" width="3" height="8" fill="none" stroke="#aca8a0"/><rect x="11" y="4" width="1" height="5" fill="#aca8a0"/></svg>
<svg style="left:88px;top:899px" width="13" height="13" viewBox="0 0 13 13" shape-rendering="crispEdges"><rect x="0" y="11" width="13" height="2" fill="#aca8a0"/><rect x="1.500" y="3.500" width="3" height="6" fill="none" stroke="#aca8a0"/><rect x="6.500" y="1.500" width="3" height="8" fill="none" stroke="#aca8a0"/><rect x="11" y="4" width="1" height="5" fill="#aca8a0"/></svg>
<svg style="left:110px;top:899px" width="13" height="13" viewBox="0 0 13 13" shape-rendering="crispEdges"><rect x="0" y="6" width="13" height="1" fill="#aca8a0"/><rect x="2.500" y="3.500" width="3" height="6" fill="none" stroke="#aca8a0"/><rect x="7.500" y="1.500" width="3" height="10" fill="none" stroke="#aca8a0"/></svg>
<svg style="left:134px;top:899px" width="12" height="13" viewBox="0 0 12 13" shape-rendering="crispEdges"><rect x="5" y="0" width="1" height="13" fill="#aca8a0"/><rect x="2.500" y="2.500" width="6" height="3" fill="#dcd9d2" stroke="#aca8a0"/><rect x="0.500" y="7.500" width="10" height="3" fill="#dcd9d2" stroke="#aca8a0"/></svg>
<svg style="left:157px;top:899px" width="13" height="14" viewBox="0 0 13 14" shape-rendering="crispEdges"><rect x="0.500" y="0.500" width="12" height="12" fill="none" stroke="#aca8a0"/><path d="M4.500 0v13M8.500 0v13M0 4.500h13M0 8.500h13" stroke="#aca8a0" fill="none"/><rect x="3.500" y="3.500" width="6" height="6" fill="none" stroke="#aca8a0"/></svg>
<svg style="left:186px;top:900px" width="17" height="16" viewBox="0 0 17 16" shape-rendering="crispEdges"><rect x="0" y="6" width="16" height="2" fill="#000"/><rect x="7" y="0" width="2" height="15" fill="#000"/><rect x="4" y="3" width="8" height="9" fill="#f00808"/></svg>
<svg style="left:212px;top:913px" width="6" height="3" viewBox="0 0 6 3" shape-rendering="crispEdges"><path d="M0 0h5l-2.500 3z" fill="#808080" shape-rendering="auto"/></svg>
<div class="a" style="left:235px;top:899px;width:16px;height:15px;background:#000000"></div>
<div class="a" style="left:258px;top:899px;width:16px;height:15px;background:#0000ff"></div>
<div class="a" style="left:281px;top:899px;width:16px;height:15px;background:#ff0000"></div>
<div class="a" style="left:304px;top:899px;width:16px;height:15px;background:#00ff00"></div>
<div class="a" style="left:327px;top:899px;width:16px;height:15px;background:#ff99cc"></div>
<div class="a" style="left:350px;top:899px;width:16px;height:15px;background:#ffff00"></div>
<div class="a" style="left:373px;top:899px;width:16px;height:15px;background:#00ffff"></div>
<div class="a" style="left:396px;top:899px;width:16px;height:15px;background:#996633"></div>
<div class="a" style="left:419px;top:899px;width:16px;height:15px;background:#008000"></div>
<div class="a" style="left:442px;top:899px;width:16px;height:15px;background:#9999cc"></div>
<div class="a" style="left:465px;top:899px;width:16px;height:15px;background:#800080"></div>
<div class="a" style="left:488px;top:899px;width:16px;height:15px;background:#0099cc"></div>
<div class="a" style="left:511px;top:899px;width:16px;height:15px;background:#ff9900"></div>
<div class="a" style="left:534px;top:899px;width:16px;height:15px;background:#99ccff"></div>
<div class="a" style="left:557px;top:899px;width:16px;height:15px;background:#808080"></div>
<div class="a" style="left:580px;top:899px;width:16px;height:15px;background:#000080"></div>
<div class="a" style="left:603px;top:899px;width:16px;height:15px;background:#808000"></div>
<div class="a" style="left:626px;top:899px;width:16px;height:15px;background:#ff0099"></div>
<div class="a" style="left:649px;top:899px;width:16px;height:15px;background:#008080"></div>
<div class="a" style="left:672px;top:899px;width:16px;height:15px;background:#99ff00"></div>
<svg style="left:698px;top:912px" width="7" height="4" viewBox="0 0 7 4"><polygon points="0.5,0.500 5.500,0.500 3,3" fill="#808080"/></svg>
<svg style="left:0;top:0" width="1183" height="942" viewBox="0 0 1183 942"><ellipse cx="189.300" cy="905" rx="64" ry="31" fill="none" stroke="#d8101c" stroke-width="1.100"/></svg>
<div class="t" style="left:5px;top:924px">Right</div>
<div class="st" style="left:412px;width:146px">X=180.78;Y=636.82</div>
<div class="st" style="left:560px;width:135px">Worked Times:00:00:00</div>
<div class="st" style="left:698px;width:204px">Laser Pos:X=0.00;Y=0.00</div>
<div class="st" style="left:905px;width:257px">Lightobject.com</div>
<svg style="left:1166px;top:925px" width="13" height="13" viewBox="0 0 13 13"><path d="M12 1L1 12M12 5L5 12M12 9L9 12" stroke="#808080" stroke-width="1.500"/><path d="M12 0L0 12M12 4L4 12M12 8L8 12" stroke="#fff" stroke-width="1"/></svg>
<div class="a" style="left:904px;top:112px;width:275px;height:17px;box-sizing:border-box;border:1px solid #808080;border-radius:2px"></div>
<div class="t" style="left:906px;top:115px">Control Panel</div>
<svg style="left:1167px;top:116px" width="9" height="9" viewBox="0 0 9 9"><path d="M0.5 0.500l8 8m0-8l-8 8" stroke="#5a5a5a" stroke-width="1" fill="none"/></svg>
<div class="grp" style="left:904px;top:139px;width:268px;height:44px"><span>Communication mode</span></div>
<div class="btn" style="left:936px;top:150px;width:95px;height:23px;line-height:22px;"><span style="">Select Mode</span></div>
<div class="a" style="left:1036px;top:151px;width:128px;height:20px;box-sizing:border-box;border:1px solid;border-color:#808080 #fff #fff #808080"></div>
<div class="t" style="left:1040px;top:153px">IP: 192.168.8.8</div>
<div class="grp" style="left:904px;top:195px;width:268px;height:186px"><span>Layer Options</span></div>
<div class="sunk" style="left:909px;top:210px;width:259px;height:137px"></div>
<div class="a" style="left:911px;top:212px;width:40px;height:16px;box-sizing:border-box;background:#dcd9d2;border:1px solid;border-color:#f4f2ee #808080 #808080 #f4f2ee"></div>
<div class="t" style="left:917px;top:215px">Layer</div>
<div class="a" style="left:951px;top:212px;width:65px;height:16px;box-sizing:border-box;background:#dcd9d2;border:1px solid;border-color:#f4f2ee #808080 #808080 #f4f2ee"></div>
<div class="t" style="left:957px;top:215px">Mode</div>
<div class="a" style="left:1016px;top:212px;width:54px;height:16px;box-sizing:border-box;background:#dcd9d2;border:1px solid;border-color:#f4f2ee #808080 #808080 #f4f2ee"></div>
<div class="t" style="left:1022px;top:215px">Speed</div>
<div class="a" style="left:1070px;top:212px;width:54px;height:16px;box-sizing:border-box;background:#dcd9d2;border:1px solid;border-color:#f4f2ee #808080 #808080 #f4f2ee"></div>
<div class="t" style="left:1076px;top:215px">Power</div>
<div class="a" style="left:1124px;top:212px;width:39px;height:16px;box-sizing:border-box;background:#dcd9d2;border:1px solid;border-color:#f4f2ee #808080 #808080 #f4f2ee"></div>
<div class="t" style="left:1130px;top:215px">Out...</div>
<div class="a" style="left:1163px;top:212px;width:3px;height:16px;box-sizing:border-box;background:#dcd9d2;border:1px solid;border-color:#f4f2ee #808080 #808080 #f4f2ee"></div>
<svg style="left:0;top:0" width="1183" height="942" viewBox="0 0 1183 942" shape-rendering="crispEdges"><rect x="911" y="245" width="255" height="1" fill="#c8c8c8"/><rect x="911" y="262" width="255" height="1" fill="#c8c8c8"/><rect x="911" y="279" width="255" height="1" fill="#c8c8c8"/><rect x="911" y="296" width="255" height="1" fill="#c8c8c8"/><rect x="911" y="313" width="255" height="1" fill="#c8c8c8"/><rect x="911" y="330" width="255" height="1" fill="#c8c8c8"/><rect x="951" y="228" width="1" height="117" fill="#c8c8c8"/><rect x="1016" y="228" width="1" height="117" fill="#c8c8c8"/><rect x="1070" y="228" width="1" height="117" fill="#c8c8c8"/><rect x="1124" y="228" width="1" height="117" fill="#c8c8c8"/><rect x="1163" y="228" width="1" height="117" fill="#c8c8c8"/><rect x="911" y="229" width="40" height="16" fill="#000"/></svg>
<div class="t" style="left:953px;top:232px">Engrave</div>
<div class="t" style="left:1018px;top:232px">0.00</div>
<div class="t" style="left:1072px;top:232px">0.00</div>
<div class="sunk" style="left:1125px;top:230px;width:15px;height:15px"></div>
<svg style="left:1128px;top:233px" width="8" height="8" viewBox="0 0 8 8"><path d="M0 3v2.800l2.500 2.200 5.500-5.500v-2.500l-5.500 5z" fill="#000"/></svg>
<div class="btn" style="left:942px;top:352px;width:41px;height:24px;line-height:23px;"><span style="">Up</span></div>
<div class="btn" style="left:990px;top:352px;width:41px;height:24px;line-height:23px;"><span style="">Down</span></div>
<div class="btn" style="left:1042px;top:352px;width:41px;height:24px;line-height:23px;"><span style="">Top</span></div>
<div class="btn" style="left:1090px;top:352px;width:41px;height:24px;line-height:23px;"><span style="">Bottom</span></div>
<div class="grp" style="left:904px;top:394px;width:268px;height:199px"><span style="top:-5px">Machine Control</span></div>
<div class="btn" style="left:910.0px;top:406px;width:63px;height:28px;line-height:27px;"><span style="">Origin</span></div>
<div class="btn" style="left:974.6px;top:406px;width:63px;height:28px;line-height:27px;"><span style="">Run Box</span></div>
<div class="btn" style="left:1039.2px;top:406px;width:63px;height:28px;line-height:27px;"><span style="">Clip Box</span></div>
<div class="btn" style="left:1103.8px;top:406px;width:63px;height:28px;line-height:27px;"><span style="">Light</span></div>
<div class="btn" style="left:910.0px;top:437px;width:63px;height:28px;line-height:27px;"><span style="">Download</span></div>
<div class="btn" style="left:974.6px;top:437px;width:63px;height:28px;line-height:27px;"><span style="">Start</span></div>
<div class="btn" style="left:1039.2px;top:437px;width:63px;height:28px;line-height:27px;"><span style="position:absolute;left:50%;top:0;transform:translateX(-50%)">Pause/Continue</span></div>
<div class="btn" style="left:1103.8px;top:437px;width:63px;height:28px;line-height:27px;"><span style="">Stop</span></div>
<div class="btn" style="left:979px;top:479px;width:41px;height:33px;line-height:32px;"><span style="">Y+</span></div>
<div class="btn" style="left:936px;top:515px;width:41px;height:34px;line-height:33px;"><span style="">X-</span></div>
<div class="btn" style="left:979px;top:515px;width:41px;height:34px;line-height:33px;"><span style="">Datum</span></div>
<div class="btn" style="left:1021px;top:515px;width:41px;height:34px;line-height:33px;"><span style="">X+</span></div>
<div class="btn" style="left:979px;top:551px;width:41px;height:34px;line-height:33px;"><span style="">Y-</span></div>
<div class="btn" style="left:1096px;top:479px;width:41px;height:33px;line-height:32px;"><span style="">Z+</span></div>
<div class="btn" style="left:1096px;top:515px;width:41px;height:34px;line-height:33px;"><span style="">Datum</span></div>
<div class="btn" style="left:1096px;top:551px;width:41px;height:34px;line-height:33px;"><span style="">Z-</span></div>
<div class="grp" style="left:904px;top:592px;width:268px;height:69px"></div>
<div class="a" style="left:930px;top:600px;width:122px;height:26px;background:#000"></div>
<div class="btn" style="left:931px;top:601px;width:120px;height:24px;line-height:23px;"><span style="">Read Current Pos:</span></div>
<div class="btn" style="left:930px;top:628px;width:122px;height:25px;line-height:24px;"><span style="">Move to Pos:</span></div>
<div class="t" style="left:1066px;top:609px">X=</div>
<div class="t" style="left:1066px;top:634px">Y=</div>
<div class="sunk" style="left:1083px;top:603px;width:65px;height:22px"></div>
<div class="t" style="left:1086px;top:607px;letter-spacing:0">100</div>
<div class="sunk" style="left:1083px;top:629px;width:65px;height:22px"></div>
<div class="t" style="left:1086px;top:633px;letter-spacing:0">100</div>
</div></body></html>
